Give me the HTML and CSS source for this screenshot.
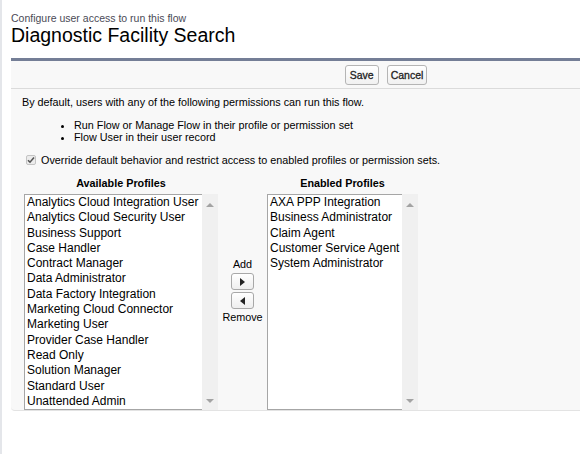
FILE: index.html
```html
<!DOCTYPE html>
<html lang="en">
<head>
    <meta charset="UTF-8">
    <title>Flow Access</title>
    <link rel="stylesheet" href="styles.css">
</head>
<body>
    <div class="page">
        <div class="header">
            <div class="subtitle">Configure user access to run this flow</div>
            <h1>Diagnostic Facility Search</h1>
        </div>

        <div class="panel">
            <div class="btn-row">
                <button class="btn">Save</button>
                <button class="btn">Cancel</button>
            </div>
            <div class="panel-body">
                <p class="intro">By default, users with any of the following permissions can run this flow.</p>
                <ul class="perms">
                    <li>Run Flow or Manage Flow in their profile or permission set</li>
                    <li>Flow User in their user record</li>
                </ul>
                <label class="override">
                    <span class="check">
                        <svg width="8" height="8" viewBox="0 0 8 8"><path d="M1 4.2 L3 6.2 L7 1.6" fill="none" stroke="#555" stroke-width="1.6"/></svg>
                    </span>
                    Override default behavior and restrict access to enabled profiles or permission sets.
                </label>

                <div class="dual">
                    <div class="col">
                        <div class="col-title">Available Profiles</div>
                        <div class="listbox available">
                            <div class="options">
                                <div>Analytics Cloud Integration User</div>
                                <div>Analytics Cloud Security User</div>
                                <div>Business Support</div>
                                <div>Case Handler</div>
                                <div>Contract Manager</div>
                                <div>Data Administrator</div>
                                <div>Data Factory Integration</div>
                                <div>Marketing Cloud Connector</div>
                                <div>Marketing User</div>
                                <div>Provider Case Handler</div>
                                <div>Read Only</div>
                                <div>Solution Manager</div>
                                <div>Standard User</div>
                                <div>Unattended Admin</div>
                            </div>
                            <div class="scroll">
                                <span class="arrow-up"></span>
                                <span class="arrow-down"></span>
                            </div>
                        </div>
                    </div>

                    <div class="mover">
                        <div>Add</div>
                        <button class="move-btn"><span class="tri-right"></span></button>
                        <button class="move-btn"><span class="tri-left"></span></button>
                        <div>Remove</div>
                    </div>

                    <div class="col">
                        <div class="col-title">Enabled Profiles</div>
                        <div class="listbox enabled">
                            <div class="options">
                                <div>AXA PPP Integration</div>
                                <div>Business Administrator</div>
                                <div>Claim Agent</div>
                                <div>Customer Service Agent</div>
                                <div>System Administrator</div>
                            </div>
                            <div class="scroll">
                                <span class="arrow-up"></span>
                                <span class="arrow-down"></span>
                            </div>
                        </div>
                    </div>
                </div>
            </div>
        </div>
    </div>
</body>
</html>
```

FILE: styles.css
```css
html, body {
    margin: 0;
    overflow: hidden;
}
body {
    font-family: "Liberation Sans", Arial, sans-serif;
    background: #fff;
    color: #000;
}
.page {
    height: 454px;
    border-left: 2px solid #e4e6ea;
    padding-left: 9px;
}
.header {
    padding-top: 12px;
}
.subtitle {
    font-size: 10.5px;
    color: #4a4a56;
    line-height: 13px;
}
h1 {
    margin: 0;
    font-size: 19.5px;
    font-weight: normal;
    line-height: 20px;
}
.panel {
    margin-top: 13px;
    width: 750px;
    background: #f8f8f8;
    border-top: 3px solid #747e96;
    border-bottom: 1px solid #e3e3e3;
    border-radius: 0 0 4px 4px;
}
.btn-row {
    display: flex;
    justify-content: center;
    gap: 8px;
    padding: 4px 0 3px;
    border-bottom: 1px solid #dbdbdb;
}
.btn {
    font-family: inherit;
    font-size: 10.5px;
    color: #222;
    min-width: 34px;
    height: 20px;
    background: linear-gradient(#fff, #f1f1f1);
    border: 1px solid #b5b5b5;
    border-radius: 3px;
    padding: 0 3px;
    -webkit-text-stroke: 0.3px #222;
}
.panel-body {
    padding: 6px 0 0 11px;
    font-size: 10.8px;
}
.intro {
    margin: 0;
    line-height: 14px;
}
.perms {
    margin: 10px 0 0;
    padding-left: 52px;
    line-height: 12px;
}
.override {
    display: flex;
    align-items: center;
    gap: 5px;
    margin-top: 11px;
}
.check {
    margin-left: 4px;
    width: 8px;
    height: 8px;
    border: 1px solid #c4c4c4;
    border-radius: 2px;
    background: #ececec;
    display: flex;
}
.dual {
    display: flex;
    align-items: flex-start;
    margin-top: 10px;
    padding-left: 2px;
}
.col-title {
    font-weight: bold;
    text-align: center;
    line-height: 14px;
    margin-bottom: 4px;
}
.listbox {
    display: flex;
    height: 216px;
    font-size: 12px;
}
.options {
    background: #fff;
    border: 1px solid #a6a6a6;
    border-right: none;
    padding: 0 0 0 2px;
    line-height: 15.3px;
}
.available .options { width: 175px; }
.enabled .options { width: 132px; }
.scroll {
    width: 16px;
    background: #f0f0f0;
    display: flex;
    flex-direction: column;
    justify-content: space-between;
    align-items: center;
    padding: 9px 0 7px;
    box-sizing: border-box;
}
.arrow-up, .arrow-down {
    width: 0;
    height: 0;
    border-left: 4px solid transparent;
    border-right: 4px solid transparent;
}
.arrow-up { border-bottom: 4px solid #a3a3a3; }
.arrow-down { border-top: 4px solid #a3a3a3; }
.mover {
    width: 49px;
    display: flex;
    flex-direction: column;
    align-items: center;
    padding-top: 81px;
    line-height: 14px;
}
.move-btn {
    width: 23px;
    height: 17px;
    margin-top: 2px;
    padding: 0;
    display: flex;
    align-items: center;
    justify-content: center;
    background: linear-gradient(#fff, #eee);
    border: 1px solid #a8a8a8;
    border-radius: 3px;
}
.move-btn + .move-btn { margin-bottom: 1px; }
.tri-right, .tri-left {
    width: 0;
    height: 0;
    border-top: 4px solid transparent;
    border-bottom: 4px solid transparent;
}
.tri-right { border-left: 5px solid #222; }
.tri-left { border-right: 5px solid #222; }
```
